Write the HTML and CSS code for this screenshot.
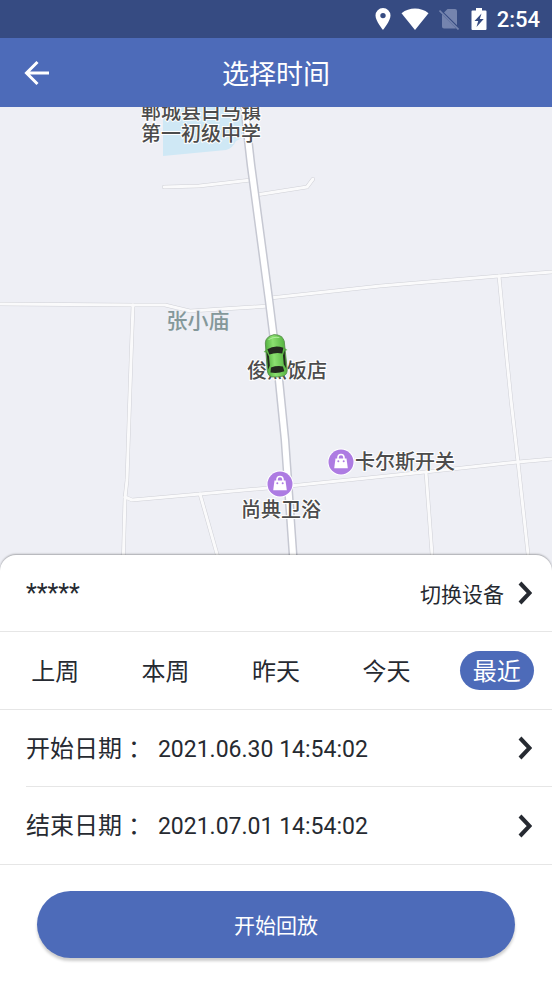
FILE: index.html
```html
<!DOCTYPE html>
<html lang="zh-CN">
<head>
  <meta charset="UTF-8">
  <meta name="viewport" content="width=device-width, initial-scale=1">
  <title>选择时间</title>
  <link rel="stylesheet" href="styles.css">
</head>
<body>
  <div class="status-bar">
    <svg width="16" height="22" viewBox="0 0 16 22">
      <path fill="#fff" fill-rule="evenodd" d="M8 0a7.500 7.500 0 0 0-7.500 7.500C.5 13 8 22 8 22s7.500-9 7.500-14.500A7.500 7.500 0 0 0 8 0zm0 4.900a2.700 2.700 0 1 1 0 5.400 2.700 2.700 0 0 1 0-5.400z"/>
    </svg>
    <svg width="28" height="22" viewBox="0 0 28 22">
      <path fill="#fff" d="M14 22L.5 5.200C4.500 2 9 .5 14 .5s9.500 1.500 13.500 4.700z"/>
    </svg>
    <svg width="20" height="22" viewBox="0 0 20 22">
      <path fill="#7584ae" d="M8.500 1H16a2 2 0 0 1 2 2v14.200L5 4.500zM3 6.300L17 20.300a2 2 0 0 1-1 .3H5a2 2 0 0 1-2-2z"/>
      <path stroke="#7584ae" stroke-width="1.600" d="M.5 2.500l19 19"/>
    </svg>
    <svg class="battery" width="16" height="22" viewBox="0 0 16 22">
      <path fill="#fff" d="M5 0h6v2.500h3.500a1 1 0 0 1 1 1V21a1 1 0 0 1-1 1h-13a1 1 0 0 1-1-1V3.500a1 1 0 0 1 1-1H5z"/>
      <path fill="#364b82" d="M10.500 5.500L3.500 13h3.700l-1.700 6 7.200-8H8.800z"/>
    </svg>
    <span class="clock">2:54</span>
  </div>

  <header class="header">
    <button class="back" aria-label="返回">
      <svg width="26" height="26" viewBox="0 0 26 26">
        <path fill="none" stroke="#fff" stroke-width="3" d="M25 13H3M13.500 2L2.500 13l11 11"/>
      </svg>
    </button>
    <h1>选择时间</h1>
  </header>

  <main class="content">
    <svg class="map" viewBox="0 0 552 464" preserveAspectRatio="xMidYMid slice">
      <defs>
        <g id="roads">
          <path d="M164 80L199 79L251 73"/>
          <path d="M256 88L307 80L313 72"/>
          <path d="M0 197L133 198L165 198L190 204L270 199"/>
          <path d="M270 191L380 179L499 169L552 165"/>
          <path d="M133 198L131 253L128 343L127 373L125 391L123 464"/>
          <path d="M125 390L132 393L200 387L280 380L425 365L518 355L552 352"/>
          <path d="M200 387L217 447L222 464"/>
          <path d="M426 365L432 447L433 464"/>
          <path d="M499 169L507 253L511 293L518 355L528 447L530 464"/>
        </g>
        <path id="main-road" d="M244 -4L251 58L269 193L279 273L285 333L293 447L294 464"/>
        <g id="shop">
          <circle r="13.500" fill="#fff"/>
          <circle r="12.500" fill="#ad7be2"/>
          <path fill="#fff" d="M-5.500 -3.500h11l1.300 9.700h-13.600z"/>
          <path fill="none" stroke="#fff" stroke-width="1.600" d="M-3 -3v-1.500a3 3 0 0 1 6 0v1.500"/>
          <circle cx="-2.700" cy="-.7" r="1" fill="#ad7be2"/>
          <circle cx="2.700" cy="-.7" r="1" fill="#ad7be2"/>
        </g>
        <linearGradient id="paint">
          <stop offset="0" stop-color="#4fae3c"/>
          <stop offset=".4" stop-color="#8be070"/>
          <stop offset="1" stop-color="#55b341"/>
        </linearGradient>
      </defs>

      <path fill="#cfe8f5" d="M163 0H244V30L236 34Q233 41 226 43L163 49z"/>
      <use href="#roads" class="road-edge"/>
      <use href="#roads" class="road"/>
      <use href="#main-road" class="main-edge"/>
      <use href="#main-road" class="main-road"/>

      <g class="labels">
        <text x="201" y="12">郸城县白马镇</text>
        <text x="201" y="34">第一初级中学</text>
        <text x="198" y="221" class="village">张小庙</text>
        <text x="287" y="271">俊杰饭店</text>
        <text x="405" y="362">卡尔斯开关</text>
        <text x="281" y="410">尚典卫浴</text>
      </g>
      <use href="#shop" x="341" y="355"/>
      <use href="#shop" x="280" y="377"/>

      <!-- car -->
      <g transform="translate(276 249) rotate(-5)">
        <path fill="#5cb848" d="M-12 -5l4-3v4zM12 -5l-4-3v4z"/>
        <path fill="url(#paint)" stroke="#55894a" stroke-width=".8" d="M-9.500 -14Q-8.500 -20.500 0 -21.500Q8.500 -20.500 9.500 -14L10 14Q10 19 6 20.500Q0 21.500 -6 20.500Q-10 19 -10 14z"/>
        <path fill="#23291f" d="M-8 -7.500Q0 -11.500 8 -7.500L6.500 -2Q0 -4 -6.500 -2zM-6 11Q0 9.500 6 11L7 16Q0 18 -7 16zM-9 -5L-7 0V9L-9 13zM9 -5L7 0V9L9 13z"/>
        <path fill="none" stroke="#b4efa0" d="M-6 -17Q0 -20 5 -18"/>
      </g>
    </svg>

    <section class="sheet">
      <div class="row device">
        <span class="device-name">*****</span>
        <button class="switch">
          切换设备
          <svg class="arrow" width="14" height="24" viewBox="0 0 14 24"><path d="M2 2l9.500 10L2 22"/></svg>
        </button>
      </div>

      <div class="row tabs">
        <button>上周</button>
        <button>本周</button>
        <button>昨天</button>
        <button>今天</button>
        <button class="active">最近</button>
      </div>

      <button class="row date">
        <span>开始日期 ： <time>2021.06.30 14:54:02</time></span>
        <svg class="arrow" width="14" height="24" viewBox="0 0 14 24"><path d="M2 2l9.500 10L2 22"/></svg>
      </button>
      <button class="row date last">
        <span>结束日期 ： <time>2021.07.01 14:54:02</time></span>
        <svg class="arrow" width="14" height="24" viewBox="0 0 14 24"><path d="M2 2l9.500 10L2 22"/></svg>
      </button>

      <div class="footer">
        <button class="play">开始回放</button>
      </div>
    </section>
  </main>
</body>
</html>
```
FILE: styles.css
```css
* {
  box-sizing: border-box;
}
body {
  display: flex;
  flex-direction: column;
  min-height: 100vh;
  margin: 0;
  font-family: Roboto, "Noto Sans CJK SC", sans-serif;
  background-color: #fff;
  color: #262a31;
}
button {
  padding: 0;
  border: none;
  background: none;
  font-family: inherit;
  color: inherit;
  cursor: pointer;
}
svg {
  display: block;
}

/* top bars */
.status-bar {
  display: flex;
  align-items: center;
  justify-content: flex-end;
  gap: 10px;
  height: 38px;
  padding: 0 12px;
  background-color: #364b82;
  color: #fff;
}
.battery {
  margin-left: 2px;
}
.clock {
  font-size: 22px;
  font-weight: 500;
}
.header {
  display: grid;
  grid-template-columns: 48px 1fr 48px;
  align-items: center;
  height: 69px;
  padding: 0 24px;
  background-color: #4d6bb9;
  color: #fff;
}
.header h1 {
  margin: 0;
  font-size: 27px;
  font-weight: 400;
  text-align: center;
}

/* map */
.content {
  flex: 1;
  display: flex;
  flex-direction: column;
}
.map {
  flex: 1 1 464px;
  width: 100%;
  min-height: 240px;
  background-color: #eeeff5;
}
.road-edge,
.road,
.main-edge,
.main-road {
  fill: none;
  stroke-linecap: round;
  stroke-linejoin: round;
}
.road-edge {
  stroke: #cfd0d6;
  stroke-width: 4px;
}
.road {
  stroke: #fafafb;
  stroke-width: 3px;
}
.main-edge {
  stroke: #c6c8d2;
  stroke-width: 9px;
}
.main-road {
  stroke: #fff;
  stroke-width: 6px;
}
.labels {
  font-size: 20px;
  font-weight: 500;
  text-anchor: middle;
  fill: #4c4c4c;
  stroke: #fff;
  stroke-width: 2px;
  paint-order: stroke;
}
.village {
  font-size: 21px;
  fill: #84989a;
  stroke: #eeeff5;
}

/* bottom sheet */
.sheet {
  margin-top: -16px;
  border-radius: 16px 16px 0 0;
  background-color: #fff;
  box-shadow: 0 -1px 2px rgba(0, 0, 0, 0.3);
}
.row {
  display: flex;
  align-items: center;
  justify-content: space-between;
  width: 100%;
  height: 77px;
  border-bottom: 1px solid #e6e6e6;
}
.device {
  padding: 0 20px 0 26px;
}
.device-name {
  font-size: 25px;
}
.switch {
  display: flex;
  align-items: center;
  gap: 14px;
  font-size: 21px;
}
.arrow path {
  fill: none;
  stroke: #262a31;
  stroke-width: 4px;
}
.tabs {
  display: grid;
  grid-template-columns: repeat(5, 1fr);
  justify-items: center;
  height: 78px;
}
.tabs button {
  height: 39px;
  padding: 4px 13px 0;
  border-radius: 20px;
  font-size: 24px;
  line-height: 35px;
}
.tabs .active {
  background-color: #4d6bb9;
  color: #fff;
}
.date {
  width: calc(100% - 26px);
  margin-left: 26px;
  padding-right: 20px;
  font-size: 24px;
}
.date span {
  padding-bottom: 4px;
}
.date time {
  font-size: 23px;
}
.date.last {
  width: 100%;
  height: 78px;
  margin-left: 0;
  padding-left: 26px;
}
.footer {
  padding: 26px 37px 23px;
}
.play {
  width: 100%;
  height: 67px;
  padding-bottom: 2px;
  border-radius: 34px;
  background-color: #4d6bb9;
  color: #fff;
  font-size: 21px;
  box-shadow: 0 3px 3px rgba(0, 0, 0, 0.2);
}
```
